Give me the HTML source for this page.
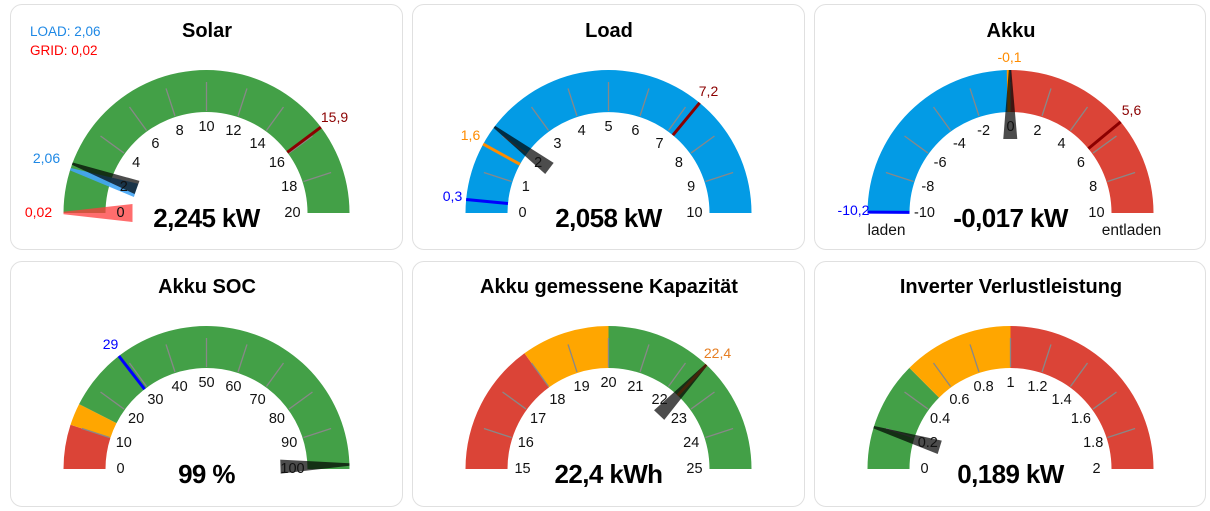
<!DOCTYPE html>
<html><head><meta charset="utf-8">
<style>
html,body{margin:0;padding:0;background:#fff;width:1210px;height:511px;overflow:hidden;font-family:"Liberation Sans",Arial,sans-serif}
.card{position:absolute;width:391px;height:244px;border:1px solid #e0e0e0;border-radius:12px;background:#fff;box-sizing:border-box}
svg{position:absolute;left:0;top:0}
text{font-family:"Liberation Sans",Arial,sans-serif}
.t{font-size:20px;font-weight:bold;text-anchor:middle;fill:#000}
.l{font-size:14.5px;text-anchor:middle;fill:#111}
.v{font-size:26px;font-weight:bold;text-anchor:middle;fill:#000;letter-spacing:-0.6px}
.m{font-size:14px;text-anchor:middle}
</style></head><body>
<div class="card" style="left:10px;top:4px;width:393px;height:246px"></div>
<div class="card" style="left:412px;top:4px;width:393px;height:246px"></div>
<div class="card" style="left:814px;top:4px;width:392px;height:246px"></div>
<div class="card" style="left:10px;top:261px;width:393px;height:246px"></div>
<div class="card" style="left:412px;top:261px;width:393px;height:246px"></div>
<div class="card" style="left:814px;top:261px;width:392px;height:246px"></div>
<svg width="1210" height="511" viewBox="0 0 1210 511">
<g id="shapes"></g>
<text class="t" x="207" y="37">Solar</text>
<text class="t" x="609" y="37">Load</text>
<text class="t" x="1011" y="37">Akku</text>
<text class="t" x="207" y="293">Akku SOC</text>
<text class="t" x="609" y="293">Akku gemessene Kapazität</text>
<text class="t" x="1011" y="293">Inverter Verlustleistung</text>
<text x="30" y="36" style="font-size:13.5px;fill:#1e88e5">LOAD: 2,06</text>
<text x="30" y="55" style="font-size:13.5px;fill:#f00">GRID: 0,02</text>

<g transform="translate(206.5,213)">
<text class="l" x="-86" y="4">0</text><text class="l" x="-82.7" y="-22">2</text><text class="l" x="-70.4" y="-46">4</text><text class="l" x="-51.1" y="-65">6</text><text class="l" x="-26.9" y="-78">8</text><text class="l" x="0" y="-82">10</text><text class="l" x="26.9" y="-78">12</text><text class="l" x="51.1" y="-65">14</text><text class="l" x="70.4" y="-46">16</text><text class="l" x="82.7" y="-22">18</text><text class="l" x="86" y="4">20</text>
<text class="v" x="0" y="14">2,245 kW</text>
<text class="m" x="-168" y="4" style="fill:#f00">0,02</text>
<text class="m" x="-160" y="-50" style="fill:#1e88e5">2,06</text>
<text class="m" x="128" y="-91" style="fill:#8b0000">15,9</text>
</g>
<g transform="translate(608.5,213)">
<text class="l" x="-86" y="4">0</text><text class="l" x="-82.7" y="-22">1</text><text class="l" x="-70.4" y="-46">2</text><text class="l" x="-51.1" y="-65">3</text><text class="l" x="-26.9" y="-78">4</text><text class="l" x="0" y="-82">5</text><text class="l" x="26.9" y="-78">6</text><text class="l" x="51.1" y="-65">7</text><text class="l" x="70.4" y="-46">8</text><text class="l" x="82.7" y="-22">9</text><text class="l" x="86" y="4">10</text>
<text class="v" x="0" y="14">2,058 kW</text>
<text class="m" x="-156" y="-12" style="fill:#00f">0,3</text>
<text class="m" x="-138" y="-73" style="fill:#ff8c00">1,6</text>
<text class="m" x="100" y="-117" style="fill:#8b0000">7,2</text>
</g>
<g transform="translate(1010.5,213)">
<text class="l" x="-86" y="4">-10</text><text class="l" x="-82.7" y="-22">-8</text><text class="l" x="-70.4" y="-46">-6</text><text class="l" x="-51.1" y="-65">-4</text><text class="l" x="-26.9" y="-78">-2</text><text class="l" x="0" y="-82">0</text><text class="l" x="26.9" y="-78">2</text><text class="l" x="51.1" y="-65">4</text><text class="l" x="70.4" y="-46">6</text><text class="l" x="82.7" y="-22">8</text><text class="l" x="86" y="4">10</text>
<text class="v" x="0" y="14">-0,017 kW</text>
<text class="m" x="-157" y="2" style="fill:#00f">-10,2</text>
<text class="m" x="-1" y="-151" style="fill:#ff8c00">-0,1</text>
<text class="m" x="121" y="-98" style="fill:#8b0000">5,6</text>
<text x="-124" y="22" style="font-size:15.5px;text-anchor:middle;fill:#111">laden</text>
<text x="121" y="22" style="font-size:15.5px;text-anchor:middle;fill:#111">entladen</text>
</g>
<g transform="translate(206.5,469)">
<text class="l" x="-86" y="4">0</text><text class="l" x="-82.7" y="-22">10</text><text class="l" x="-70.4" y="-46">20</text><text class="l" x="-51.1" y="-65">30</text><text class="l" x="-26.9" y="-78">40</text><text class="l" x="0" y="-82">50</text><text class="l" x="26.9" y="-78">60</text><text class="l" x="51.1" y="-65">70</text><text class="l" x="70.4" y="-46">80</text><text class="l" x="82.7" y="-22">90</text><text class="l" x="86" y="4">100</text>
<text class="v" x="0" y="14">99 %</text>
<text class="m" x="-96" y="-120" style="fill:#00f">29</text>
</g>
<g transform="translate(608.5,469)">
<text class="l" x="-86" y="4">15</text><text class="l" x="-82.7" y="-22">16</text><text class="l" x="-70.4" y="-46">17</text><text class="l" x="-51.1" y="-65">18</text><text class="l" x="-26.9" y="-78">19</text><text class="l" x="0" y="-82">20</text><text class="l" x="26.9" y="-78">21</text><text class="l" x="51.1" y="-65">22</text><text class="l" x="70.4" y="-46">23</text><text class="l" x="82.7" y="-22">24</text><text class="l" x="86" y="4">25</text>
<text class="v" x="0" y="14">22,4 kWh</text>
<text class="m" x="109" y="-111" style="fill:#e67e22">22,4</text>
</g>
<g transform="translate(1010.5,469)">
<text class="l" x="-86" y="4">0</text><text class="l" x="-82.7" y="-22">0.2</text><text class="l" x="-70.4" y="-46">0.4</text><text class="l" x="-51.1" y="-65">0.6</text><text class="l" x="-26.9" y="-78">0.8</text><text class="l" x="0" y="-82">1</text><text class="l" x="26.9" y="-78">1.2</text><text class="l" x="51.1" y="-65">1.4</text><text class="l" x="70.4" y="-46">1.6</text><text class="l" x="82.7" y="-22">1.8</text><text class="l" x="86" y="4">2</text>
<text class="v" x="0" y="14">0,189 kW</text>
</g>
</svg>
<script>
(function(){
var G='#43a047',R='#db4437',O='#ffa600',B='#039be5';
var R0=101,R1=143,s='';
function P(r,a){a=a*Math.PI/180;return [r*Math.cos(a),-r*Math.sin(a)];}
function ang(f){return 180-180*f;}
function arc(cx,cy,f0,f1,c){var a0=ang(f0),a1=ang(f1);var p1=P(R1,a0),p2=P(R1,a1),p3=P(R0,a1),p4=P(R0,a0);
s+='<path fill="'+c+'" d="M'+(cx+p1[0])+' '+(cy+p1[1])+' A'+R1+' '+R1+' 0 0 1 '+(cx+p2[0])+' '+(cy+p2[1])+' L'+(cx+p3[0])+' '+(cy+p3[1])+' A'+R0+' '+R0+' 0 0 0 '+(cx+p4[0])+' '+(cy+p4[1])+'Z"/>';}
function ticks(cx,cy){for(var k=1;k<10;k++){var a=ang(k/10),p=P(102,a),q=P(131,a);s+='<line x1="'+(cx+p[0])+'" y1="'+(cy+p[1])+'" x2="'+(cx+q[0])+'" y2="'+(cy+q[1])+'" stroke="#888" stroke-width="1.3"/>';}}
function mark(cx,cy,f,c){var a=ang(f),p=P(R0,a),q=P(R1,a);s+='<line x1="'+(cx+p[0])+'" y1="'+(cy+p[1])+'" x2="'+(cx+q[0])+'" y2="'+(cy+q[1])+'" stroke="'+c+'" stroke-width="3"/>';}
function needle(cx,cy,f,c,w){w=w||7;var a=ang(f),t1=P(R1,a+0.5),t2=P(R1,a-0.5),b=P(74,a),n=P(w,a-90);
var b1=[b[0]+n[0],b[1]+n[1]],b2=[b[0]-n[0],b[1]-n[1]];
s+='<polygon fill="'+c+'" points="'+(cx+t1[0])+','+(cy+t1[1])+' '+(cx+t2[0])+','+(cy+t2[1])+' '+(cx+b1[0])+','+(cy+b1[1])+' '+(cx+b2[0])+','+(cy+b2[1])+'"/>';}
var x1=206.5,x2=608.5,x3=1010.5,y1=213,y2=469;
arc(x1,y1,0,1,G);ticks(x1,y1);mark(x1,y1,15.9/20,'#8b0000');
needle(x1,y1,0.0,'rgba(255,60,60,0.75)',9);
needle(x1,y1,2.06/20-0.004,'rgba(66,165,245,0.9)');
needle(x1,y1,2.245/20,'rgba(0,0,0,0.7)');
arc(x2,y1,0,1,B);ticks(x2,y1);mark(x2,y1,0.03,'#00f');mark(x2,y1,0.16,'#ff8c00');mark(x2,y1,0.72,'#8b0000');
needle(x2,y1,0.2058,'rgba(0,0,0,0.7)');
arc(x3,y1,0,0.5,B);arc(x3,y1,0.5,1,R);ticks(x3,y1);mark(x3,y1,0.002,'#00f');mark(x3,y1,0.495,'#ff9800');mark(x3,y1,0.78,'#8b0000');
needle(x3,y1,0.499,'rgba(0,0,0,0.7)');
arc(x1,y2,0,0.1,R);arc(x1,y2,0.1,0.15,O);arc(x1,y2,0.15,1,G);ticks(x1,y2);mark(x1,y2,0.29,'#00f');
needle(x1,y2,0.99,'rgba(0,0,0,0.7)');
arc(x2,y2,0,0.3,R);arc(x2,y2,0.3,0.5,O);arc(x2,y2,0.5,1,G);ticks(x2,y2);mark(x2,y2,0.74,'#e67e22');
needle(x2,y2,0.74,'rgba(0,0,0,0.7)');
arc(x3,y2,0,0.25,G);arc(x3,y2,0.25,0.5,O);arc(x3,y2,0.5,1,R);ticks(x3,y2);
needle(x3,y2,0.0945,'rgba(0,0,0,0.7)');
document.getElementById('shapes').innerHTML=s;
})();
</script>
</body></html>
